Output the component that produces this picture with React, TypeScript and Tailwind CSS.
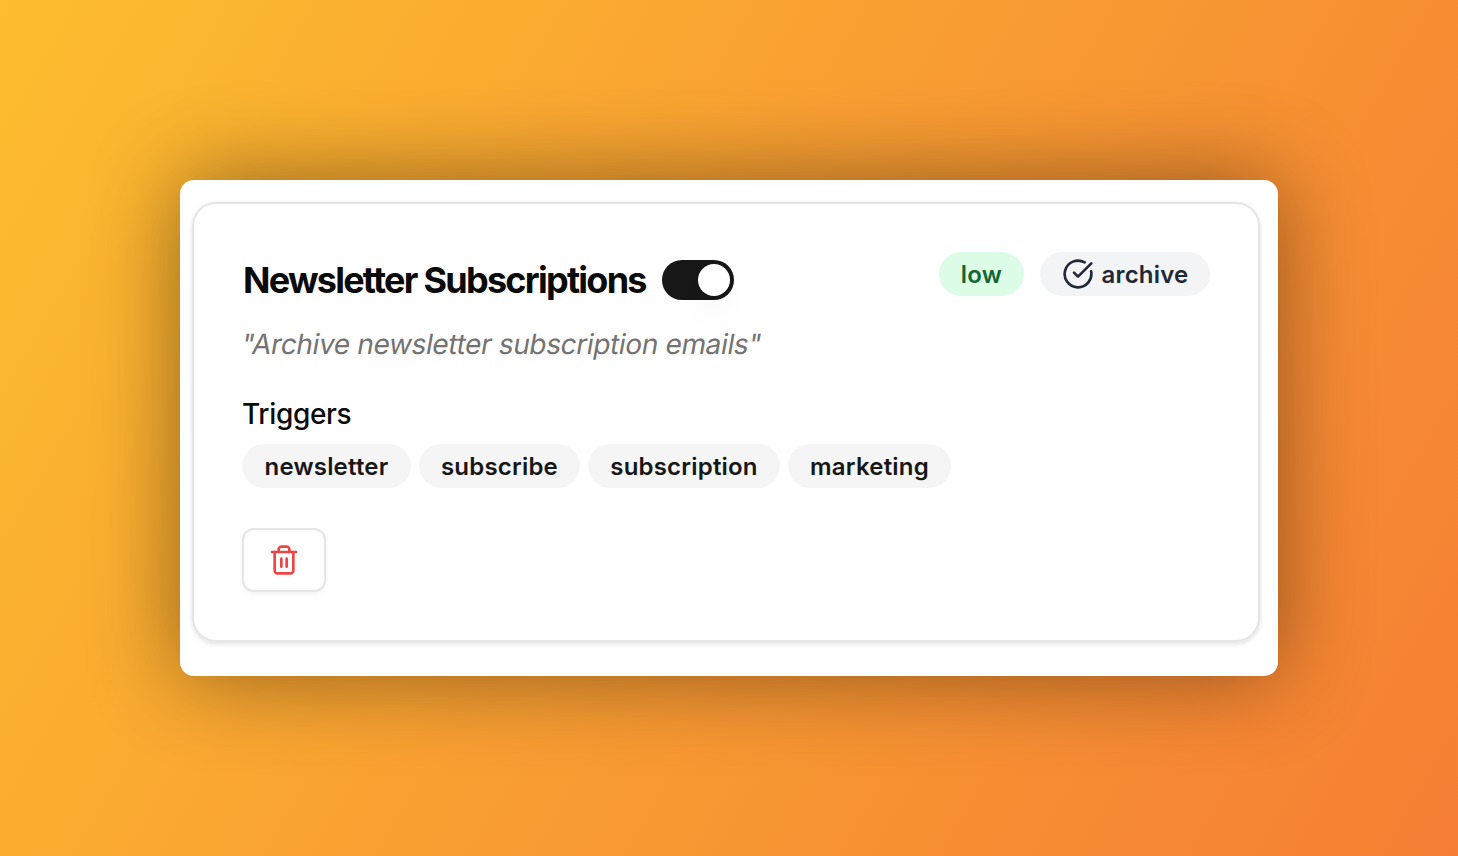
import type { ReactNode } from "react";
import { CircleCheckBig } from "lucide-react";

const triggers = [
  { label: "newsletter", width: "w-[169px]" },
  { label: "subscribe", width: "w-[161px]" },
  { label: "subscription", width: "w-[192px]" },
  { label: "marketing", width: "w-[163px]" },
];

function Pill({ className, children }: { className: string; children: ReactNode }) {
  return (
    <span className={`flex h-11 items-center justify-center whitespace-nowrap rounded-full text-[24px] font-[640] tracking-[0.2px] ${className}`}>
      {children}
    </span>
  );
}

function TrashIcon() {
  return (
    <svg width="32" height="32" viewBox="0 0 24 24" fill="none" stroke="#ef4444" strokeWidth="2" strokeLinecap="round" strokeLinejoin="round">
      <path d="M3 6h18" />
      <path d="M19 6v14c0 1-1 2-2 2H7c-1 0-2-1-2-2V6" />
      <path d="M8 6V4c0-1 1-2 2-2h4c1 0 2 1 2 2v2" />
      <path d="M10 11v6" />
      <path d="M14 11v6" />
    </svg>
  );
}

export default function App() {
  return (
    <div className="flex h-[856px] w-[1458px] items-center justify-center bg-[linear-gradient(120deg,#fdbd2f_0%,#f9a032_45%,#f57e34_100%)] font-[Inter,sans-serif] [font-variant-ligatures:none]">
      <main className="h-[496px] w-[1098px] rounded-[14px] bg-white pl-3 pt-[22px] shadow-[0_0_90px_rgba(0,0,0,0.43)]">
        <section className="h-[440px] w-[1068px] rounded-3xl border-2 border-[#e5e5e5] px-12 pt-12 shadow-[0_2px_5px_rgba(0,0,0,0.12)]">
          <div className="flex items-start justify-between">
            <div className="flex h-14 items-center gap-4">
              <h1 className="w-[404px] whitespace-nowrap pl-px text-[36px] font-[650] tracking-[-1.75px] text-[#0a0a0a]">Newsletter Subscriptions</h1>
              <button className="flex h-10 w-[72px] items-center justify-end rounded-full bg-[#171717] pr-1" aria-label="Enabled">
                <span className="size-8 rounded-full bg-white shadow-[0_20px_30px_rgba(0,0,0,0.03)]" />
              </button>
            </div>
            <div className="flex gap-4">
              <Pill className="w-[85px] bg-[#dcfce7] text-[#166534]">
                <span className="pt-0.5">low</span>
              </Pill>
              <Pill className="w-[170px] gap-2 bg-[#f3f4f6] text-[#1f2937]">
                <CircleCheckBig size={32} strokeWidth={2} />
                <span className="pt-0.5">archive</span>
              </Pill>
            </div>
          </div>
          <p className="mt-4 h-10 whitespace-nowrap text-[28px] leading-10 tracking-[-0.35px] text-[#737373]">
            <span className="inline-block -skew-x-10">"Archive newsletter subscription emails"</span>
          </p>
          <h2 className="mt-[30px] text-[28px] font-medium leading-10 tracking-[-0.35px] text-[#0a0a0a]">Triggers</h2>
          <div className="mt-2.5 flex gap-2">
            {triggers.map((trigger) => (
              <Pill key={trigger.label} className={`bg-[#f5f5f5] text-[#171717] ${trigger.width}`}>
                <span className="pt-0.5">{trigger.label}</span>
              </Pill>
            ))}
          </div>
          <button className="mt-10 flex h-16 w-21 items-center justify-center rounded-xl border-2 border-[#e5e5e5] bg-white shadow-[0_2px_4px_rgba(0,0,0,0.05)]" aria-label="Delete rule">
            <TrashIcon />
          </button>
        </section>
      </main>
    </div>
  );
}
